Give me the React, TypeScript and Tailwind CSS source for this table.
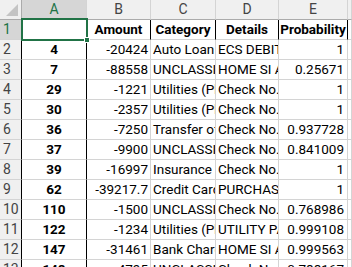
import { Fragment } from "react"

const rows: [string, string, string, string, string][] = [
    ["4", "-20424", "Auto Loan (EMI)", "ECS DEBIT CHARGES", "1"],
    ["7", "-88558", "UNCLASSIFIED", "HOME SI AUTO", "0.25671"],
    ["29", "-1221", "Utilities (Phone)", "Check No. 104", "1"],
    ["30", "-2357", "Utilities (Phone)", "Check No. 105", "1"],
    ["36", "-7250", "Transfer of funds", "Check No. 106", "0.937728"],
    ["37", "-9900", "UNCLASSIFIED", "Check No. 107", "0.841009"],
    ["39", "-16997", "Insurance", "Check No. 108", "1"],
    ["62", "-39217.7", "Credit Card", "PURCHASE", "1"],
    ["110", "-1500", "UNCLASSIFIED", "Check No. 109", "0.768986"],
    ["122", "-1234", "Utilities (Phone)", "UTILITY PAYMENT", "0.999108"],
    ["147", "-31461", "Bank Charges", "HOME SI AUTO", "0.999563"],
    ["148", "-4795", "UNCLASSIFIED", "Check No. 110", "0.788167"],
]

const grid = "grid grid-cols-[22px_65px_64px_65px_63px_69px_4px]"
const font = { fontFamily: "Roboto, 'Liberation Sans', sans-serif" }

const ColHead = ({ label, active }: { label: string, active?: boolean }) => (
    <div className={`h-[20px] flex items-center justify-center text-[14px] border-r border-[#d4d4d4] ${active ? "bg-[#d6d6d6] text-[#217346] border-b-2 border-b-[#217346]" : "bg-[#f0f0f0] text-[#444] border-b border-b-[#ababab]"}`}>
        {label}
    </div>
)

const RowHead = ({ n, active }: { n: number, active?: boolean }) => (
    <div className={`h-[20px] flex items-center pl-[3px] text-[14px] border-b border-[#d4d4d4] border-r ${active ? "bg-[#d6d6d6] text-[#217346] border-r-[#217346]" : "bg-[#f0f0f0] text-[#444] border-r-black"}`}>
        {n}
    </div>
)

const Cell = ({ children, className }: { children?: React.ReactNode, className?: string }) => (
    <div className={`h-[20px] flex items-center overflow-hidden whitespace-nowrap text-[13.5px] text-black border-b border-[#d4d4d4] border-r ${className ?? ""}`}>
        {children}
    </div>
)

export default function App() {
    return (
        <div className="relative w-[352px] h-[267px] overflow-hidden bg-white" style={font}>
            <div className={grid}>
                <div className="h-[20px] bg-[#f0f0f0] border-r border-b border-[#ababab] flex items-end justify-end p-[3px]">
                    <svg width="12" height="12" viewBox="0 0 12 12">
                        <polygon points="12,0 12,12 0,12" fill="#c4c4c4" />
                    </svg>
                </div>
                <ColHead label="A" active />
                <ColHead label="B" />
                <ColHead label="C" />
                <ColHead label="D" />
                <ColHead label="E" />
                <ColHead label="" />

                <RowHead n={1} active />
                <Cell className="border-r-black" />
                <Cell className="justify-center font-bold border-r-black">Amount</Cell>
                <Cell className="justify-center font-bold border-r-black">Category</Cell>
                <Cell className="justify-center font-bold border-r-black">Details</Cell>
                <Cell className="justify-center font-bold border-r-black">Probability</Cell>
                <Cell className="border-r-[#d4d4d4]" />

                {rows.map((r, i) => (
                    <Fragment key={i}>
                        <RowHead n={i + 2} />
                        <Cell className="justify-center font-bold border-r-black">{r[0]}</Cell>
                        <Cell className="justify-end pr-[2px] border-r-[#d4d4d4]">{r[1]}</Cell>
                        <Cell className="pl-[2px] border-r-[#d4d4d4]">{r[2]}</Cell>
                        <Cell className="pl-[2px] border-r-[#d4d4d4]">{r[3]}</Cell>
                        <Cell className="justify-end pr-[3px] border-r-[#d4d4d4]">{r[4]}</Cell>
                        <Cell className="border-r-[#d4d4d4]" />
                    </Fragment>
                ))}
            </div>

            {/* active cell selection */}
            <div className="absolute left-[21px] top-[18px] w-[67px] h-[23px] border-2 border-[#217346]" />
            <div className="absolute left-[84px] top-[37px] w-[6px] h-[6px] bg-[#217346] border border-white" />
        </div>
    )
}
